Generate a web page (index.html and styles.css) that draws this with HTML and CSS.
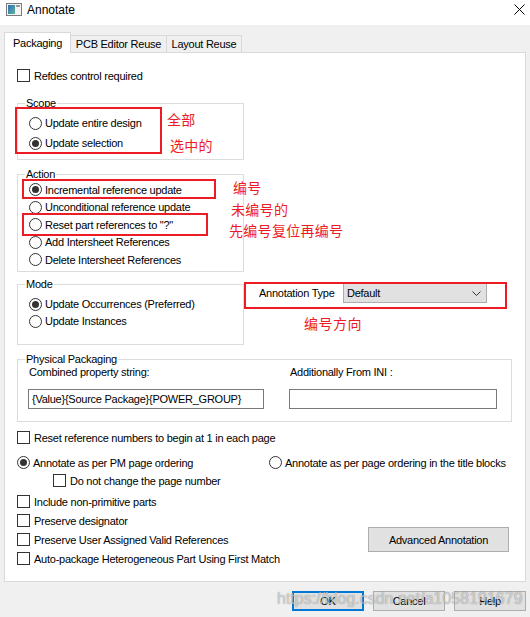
FILE: index.html
```html
<!DOCTYPE html>
<html>
<head>
<meta charset="utf-8">
<link rel="stylesheet" href="styles.css">
</head>
<body>
<div class="window">
  <div class="titlebar">
    <svg class="app-icon" width="16" height="13" viewBox="0 0 16 13">
      <defs>
        <linearGradient id="ig" x1="0" y1="0" x2="1" y2="1">
          <stop offset="0" stop-color="#2f6fb5"/>
          <stop offset="1" stop-color="#5fb39a"/>
        </linearGradient>
      </defs>
      <rect x="0.5" y="0.5" width="15" height="12" fill="#f4f4f4" stroke="#7b7b7b"/>
      <rect x="2" y="2" width="7" height="9" fill="url(#ig)"/>
      <rect x="10" y="2" width="4" height="2" fill="#9a9a9a"/>
    </svg>
    <span class="title">Annotate</span>
    <svg class="close" width="11" height="11" viewBox="0 0 11 11">
      <path d="M0.5 0.5 L10.5 10.5 M10.5 0.5 L0.5 10.5" stroke="#000" stroke-width="1" fill="none"/>
    </svg>
  </div>

  <div class="tabs">
    <div class="tab active t1">Packaging</div>
    <div class="tab t2">PCB Editor Reuse</div>
    <div class="tab t3">Layout Reuse</div>
  </div>

  <div class="panel">
    <div class="row"><span class="cb"></span><span>Refdes control required</span></div>

    <fieldset class="group scope">
      <legend>Scope</legend>
      <div class="body">
        <div class="row"><span class="rb"></span><span>Update entire design</span></div>
        <div class="row"><span class="rb on"></span><span>Update selection</span></div>
      </div>
    </fieldset>

    <fieldset class="group action">
      <legend>Action</legend>
      <div class="body">
        <div class="row"><span class="rb on"></span><span>Incremental reference update</span></div>
        <div class="row"><span class="rb"></span><span>Unconditional reference update</span></div>
        <div class="row"><span class="rb"></span><span>Reset part references to "?"</span></div>
        <div class="row"><span class="rb"></span><span>Add Intersheet References</span></div>
        <div class="row"><span class="rb"></span><span>Delete Intersheet References</span></div>
      </div>
    </fieldset>

    <div class="mode-row">
      <fieldset class="group mode">
        <legend>Mode</legend>
        <div class="body">
          <div class="row"><span class="rb on"></span><span>Update Occurrences (Preferred)</span></div>
          <div class="row"><span class="rb"></span><span>Update Instances</span></div>
        </div>
      </fieldset>
      <div class="anno-type">
        <span class="anno-label">Annotation Type</span>
        <div class="combo">
          <span>Default</span>
          <svg class="chev" width="9" height="5" viewBox="0 0 9 5"><polyline points="0.5,0.5 4.5,4.5 8.5,0.5" fill="none" stroke="#333" stroke-width="1"/></svg>
        </div>
      </div>
    </div>

    <fieldset class="group pp">
      <legend>Physical Packaging</legend>
      <div class="body pp-grid">
        <div class="pp-label">Combined property string:</div>
        <div class="pp-label">Additionally From INI :</div>
        <div class="input">{Value}{Source Package}{POWER_GROUP}</div>
        <div class="input"></div>
      </div>
    </fieldset>

    <div class="row reset-row"><span class="cb"></span><span>Reset reference numbers to begin at 1 in each page</span></div>

    <div class="order-row">
      <div class="row"><span class="rb on"></span><span>Annotate as per PM page ordering</span></div>
      <div class="row"><span class="rb"></span><span>Annotate as per page ordering in the title blocks</span></div>
    </div>
    <div class="row indent"><span class="cb"></span><span>Do not change the page number</span></div>

    <div class="bottom-block">
      <div class="checks">
        <div class="row"><span class="cb"></span><span>Include non-primitive parts</span></div>
        <div class="row"><span class="cb"></span><span>Preserve designator</span></div>
        <div class="row"><span class="cb"></span><span>Preserve User Assigned Valid References</span></div>
        <div class="row"><span class="cb"></span><span>Auto-package Heterogeneous Part Using First Match</span></div>
      </div>
      <div class="btn adv">Advanced Annotation</div>
    </div>

    <div class="redbox rb-scope"></div>
    <div class="redbox rb-inc"></div>
    <div class="redbox rb-reset"></div>
    <div class="redbox rb-anno"></div>
    <div class="note n1">全部</div>
    <div class="note n2">选中的</div>
    <div class="note n3">编号</div>
    <div class="note n4">未编号的</div>
    <div class="note n5">先编号复位再编号</div>
    <div class="note n6">编号方向</div>
  </div>

  <div class="footer">
    <div class="btn ok">OK</div>
    <div class="btn">Cancel</div>
    <div class="btn">Help</div>
  </div>

  <div class="watermark">https://blog.csdn.net/a1058191679</div>
</div>
</body>
</html>
```

FILE: styles.css
```css
html, body {
  margin: 0;
  padding: 0;
}
body {
  background: #f0f0f0;
  font-family: "Liberation Sans", Arial, sans-serif;
  font-size: 11px;
  letter-spacing: -0.25px;
  color: #000;
}
.window {
  position: relative;
  width: 530px;
  height: 617px;
  overflow: hidden;
  background: #f0f0f0;
}

/* title bar */
.titlebar {
  height: 25px;
  background: #fff;
  display: flex;
  align-items: flex-start;
}
.app-icon {
  margin: 3px 0 0 6px;
}
.title {
  margin: 3px 0 0 5px;
  font-size: 12px;
  line-height: 14px;
  letter-spacing: 0;
}
.close {
  margin: 4px 5px 0 auto;
}

/* tabs */
.tabs {
  height: 27px;
  display: flex;
  align-items: flex-end;
  padding-left: 4px;
}
.tab {
  box-sizing: border-box;
  height: 17px;
  border: 1px solid #d9d9d9;
  border-bottom: 0;
  background: #f0f0f0;
  display: flex;
  align-items: center;
  justify-content: center;
  line-height: 13px;
}
.tab.active {
  position: relative;
  z-index: 2;
  height: 21px;
  margin-bottom: -1px;
  background: #fff;
}
.t1 { width: 67px; }
.t2 { width: 97px; margin-left: -1px; }
.t3 { width: 76px; margin-left: -1px; }

/* panel */
.panel {
  position: relative;
  box-sizing: border-box;
  margin-left: 4px;
  width: 522px;
  height: 530px;
  border: 1px solid #d9d9d9;
  background: #fff;
  padding: 14px 0 0 12px;
}

.row {
  display: flex;
  align-items: center;
  height: 17px;
  white-space: nowrap;
}
.cb {
  box-sizing: border-box;
  width: 13px;
  height: 13px;
  border: 1px solid #333;
  background: #fff;
  margin-right: 4px;
  flex: none;
}
.rb {
  box-sizing: border-box;
  width: 13px;
  height: 13px;
  border: 1px solid #333;
  border-radius: 50%;
  background: #fff;
  margin-right: 3px;
  flex: none;
  display: flex;
  align-items: center;
  justify-content: center;
}
.rb.on::after {
  content: "";
  width: 7px;
  height: 7px;
  border-radius: 50%;
  background: #333;
}

/* group boxes */
.group {
  box-sizing: border-box;
  width: 227px;
  margin: 0;
  padding: 0;
  border: 1px solid #dcdcdc;
  min-inline-size: 0;
}
.group legend {
  margin-left: 7px;
  padding: 0 1px;
  font-size: 11px;
  line-height: 13px;
}
.scope { margin-top: 13px; }
.scope .body { padding: 3px 0 6px 11px; }
.scope .row { height: 20px; }

.action { margin-top: 8px; }
.action .body { padding: 0 0 2.5px 11px; }
.action .row { height: 17.5px; }

.mode-row {
  display: flex;
  align-items: flex-start;
  margin-top: 6px;
}
.mode .body { padding: 4.5px 0 14.5px 11px; }

.anno-type {
  display: flex;
  align-items: center;
  margin: 5px 0 0 15px;
}
.anno-label {
  width: 84px;
  white-space: nowrap;
}
.combo {
  box-sizing: border-box;
  width: 144px;
  height: 20px;
  background: #e1e1e1;
  border: 1px solid #adadad;
  display: flex;
  align-items: center;
  padding-left: 3px;
}
.chev {
  margin: 0 5px 0 auto;
}

.pp {
  width: 495px;
  margin-top: 8px;
}
.pp-grid {
  display: grid;
  grid-template-columns: 236px 208px;
  grid-template-rows: 13px 20px;
  column-gap: 25px;
  row-gap: 10px;
  padding: 0 0 12px 10px;
}
.pp-label {
  line-height: 13px;
  white-space: nowrap;
  padding-left: 1px;
}
.input {
  box-sizing: border-box;
  height: 20px;
  border: 1px solid #7a7a7a;
  background: #fff;
  display: flex;
  align-items: center;
  padding-left: 3px;
  white-space: nowrap;
  overflow: hidden;
}

.reset-row { margin-top: 7px; }
.order-row {
  display: grid;
  grid-template-columns: 252px auto;
  margin-top: 8px;
}
.indent {
  margin-top: 1px;
  padding-left: 36px;
}
.bottom-block {
  display: flex;
  align-items: flex-end;
  margin-top: 4px;
}
.checks {
  display: flex;
  flex-direction: column;
  gap: 2px;
}

/* buttons */
.btn {
  box-sizing: border-box;
  background: #e1e1e1;
  border: 1px solid #adadad;
  display: flex;
  align-items: center;
  justify-content: center;
  white-space: nowrap;
}
.adv {
  width: 141px;
  height: 25px;
  margin: 0 16px 15px auto;
}
.footer {
  display: flex;
  justify-content: flex-end;
  gap: 9px;
  margin-top: 9px;
  padding-right: 4px;
}
.footer .btn {
  width: 72px;
  height: 20px;
}
.footer .btn.ok {
  border: 2px solid #0078d7;
}

/* annotation overlays */
.redbox {
  position: absolute;
  box-sizing: border-box;
  border: 2px solid #ed1c24;
}
.rb-scope { left: 10px; top: 54px; width: 147px; height: 47px; }
.rb-inc { left: 17px; top: 126px; width: 194px; height: 20px; }
.rb-reset { left: 17px; top: 160px; width: 186px; height: 23px; }
.rb-anno { left: 239px; top: 229px; width: 263px; height: 27px; }

.note {
  position: absolute;
  color: #ed1c24;
  font-family: "Noto Sans CJK SC", "Noto Sans", sans-serif;
  font-size: 14px;
  line-height: 16px;
  letter-spacing: 0.3px;
  white-space: nowrap;
}
.n1 { left: 162px; top: 58px; }
.n2 { left: 165px; top: 84px; }
.n3 { left: 228px; top: 126px; }
.n4 { left: 226px; top: 148px; }
.n5 { left: 224px; top: 169px; }
.n6 { left: 299px; top: 262px; letter-spacing: 0.5px; }

.watermark {
  position: absolute;
  left: 277px;
  top: 590px;
  font-size: 16px;
  line-height: 18px;
  letter-spacing: 0;
  color: rgba(255, 255, 255, 0.6);
  text-shadow: 0 0 1px rgba(0, 0, 0, 0.35), 0 0 1px rgba(0, 0, 0, 0.2);
  white-space: nowrap;
  pointer-events: none;
}
```
